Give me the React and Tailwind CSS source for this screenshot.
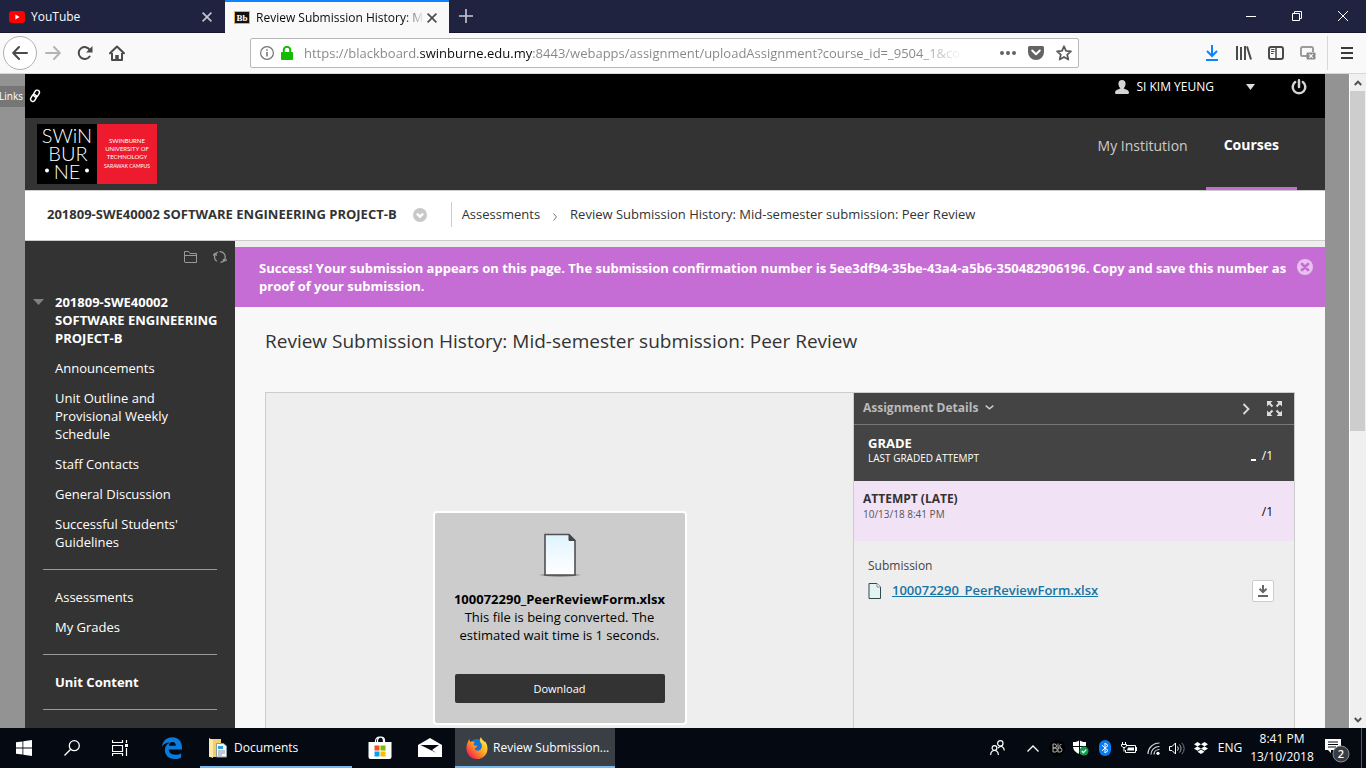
import React from "react";

const navItem = "block text-[13px] leading-[18px] text-white";

function IconButton({ label, className = "", children }) {
  return (
    <button type="button" aria-label={label} className={"flex shrink-0 items-center justify-center " + className}>
      {children}
    </button>
  );
}

function Cross({ color }) {
  return (
    <svg width="10" height="10" viewBox="0 0 10 10" fill="none" stroke={color} strokeWidth="1.6">
      <path d="M.6.6l8.8 8.8M9.4.6L.6 9.4" />
    </svg>
  );
}

function TabBar() {
  return (
    <div className="flex h-[33px] shrink-0 border-b border-[#14162c] bg-[#202340] text-[12px]">
      <div className="flex w-[225px] items-center pt-[2px] pr-[10px] pl-2 text-[#f9f9fa]">
        <svg width="18" height="12" viewBox="0 0 18 12" className="shrink-0">
          <rect x="1" width="16" height="12" rx="3" fill="#f00" />
          <path d="M7.4 3.4v5.2L11.6 6z" fill="#fff" />
        </svg>
        <span className="ml-[5px] flex-1">YouTube</span>
        <IconButton label="Close tab" className="size-4">
          <Cross color="#c6c6d0" />
        </IconButton>
      </div>
      <div className="-mb-px flex w-[224px] items-center border-t-2 border-[#0a84ff] bg-[#f9f9fa] pr-2 pl-[9px] text-[#0c0c0d]">
        <svg width="16" height="13" viewBox="0 0 16 13" className="shrink-0">
          <rect x=".5" y=".5" width="15" height="12" fill="#111" stroke="#e0b040" />
          <text x="8" y="10" textAnchor="middle" fontSize="9" fontWeight="700" fill="#fff" fontFamily="Liberation Serif, serif">
            Bb
          </text>
        </svg>
        <span className="ml-[6px] w-[168px] shrink-0 overflow-hidden whitespace-nowrap [mask-image:linear-gradient(to_right,#000_88%,transparent)]">
          Review Submission History: Mid-semester submission
        </span>
        <IconButton label="Close tab" className="size-4">
          <Cross color="#4a4a4c" />
        </IconButton>
      </div>
      <IconButton label="New tab" className="w-[34px]">
        <svg width="14" height="14" viewBox="0 0 14 14" stroke="#c9c9d4" strokeWidth="1.6">
          <path d="M7 0v14M0 7h14" />
        </svg>
      </IconButton>
      <div className="ml-auto flex">
        <IconButton label="Minimize" className="w-[46px]">
          <svg width="10" height="10" viewBox="0 0 10 10" stroke="#fff">
            <path d="M0 5.5h10" />
          </svg>
        </IconButton>
        <IconButton label="Restore" className="w-[46px]">
          <svg width="10" height="10" viewBox="0 0 10 10" fill="none" stroke="#fff">
            <path d="M.5 2.5h7v7h-7zM2.5 2.5v-2h7v7h-2" />
          </svg>
        </IconButton>
        <IconButton label="Close" className="w-[46px]">
          <svg width="10" height="10" viewBox="0 0 10 10" fill="none" stroke="#fff">
            <path d="M0 0l10 10M10 0L0 10" />
          </svg>
        </IconButton>
      </div>
    </div>
  );
}

function Toolbar() {
  return (
    <div className="flex h-[41px] shrink-0 items-center border-b border-[#d7d7db] bg-[#f9f9fa] pl-[3px]">
      <IconButton label="Back" className="size-[34px] rounded-full border border-[#b1b1b3] bg-white">
        <svg width="16" height="16" viewBox="0 0 16 16" fill="none" stroke="#4a4a4c" strokeWidth="2" strokeLinecap="round" strokeLinejoin="round">
          <path d="M7 2L1.2 8 7 14M1.5 8H15" />
        </svg>
      </IconButton>
      <IconButton label="Forward" className="size-8">
        <svg width="16" height="16" viewBox="0 0 16 16" fill="none" stroke="#b4b4b6" strokeWidth="2" strokeLinecap="round" strokeLinejoin="round">
          <path d="M9 2l5.8 6L9 14M14.500 8H1" />
        </svg>
      </IconButton>
      <IconButton label="Reload" className="size-8">
        <svg width="16" height="16" viewBox="0 0 16 16" fill="none" stroke="#4a4a4c" strokeWidth="2">
          <path d="M12.600 11.500A6 6 0 1 1 13 5.200" strokeLinecap="round" />
          <path d="M15.500 1v6.500H9z" fill="#4a4a4c" stroke="none" />
        </svg>
      </IconButton>
      <IconButton label="Home" className="size-8">
        <svg width="16" height="16" viewBox="0 0 16 16" fill="none" stroke="#4a4a4c" strokeWidth="2" strokeLinejoin="round">
          <path d="M1 8.300L8 1.500l7 6.800" strokeLinecap="round" />
          <path d="M3 8v7h10V8" />
          <path d="M8 10v5" strokeWidth="3.500" />
        </svg>
      </IconButton>
      <div className="mx-[117px] flex h-[30px] min-w-0 flex-1 items-center rounded-[2px] border border-[#b8b8bb] bg-white pl-[9px]">
        <svg width="14" height="14" viewBox="0 0 14 14" fill="none" stroke="#737375" className="shrink-0">
          <circle cx="7" cy="7" r="6.400" strokeWidth="1.200" />
          <path d="M7 6v4.500M7 3.200v1.500" strokeWidth="1.500" />
        </svg>
        <svg width="12" height="14" viewBox="0 0 12 14" className="ml-[7px] shrink-0">
          <rect y="6" width="12" height="8" rx="1" fill="#12bc00" />
          <path d="M2.800 7V4a3.200 3.200 0 0 1 6.400 0v3" fill="none" stroke="#12bc00" strokeWidth="2" />
        </svg>
        <input
          aria-label="Address"
          readOnly
          defaultValue="https://blackboard.swinburne.edu.my:8443/webapps/assignment/uploadAssignment?course_id=_9504_1&course"
          className="ml-[11px] min-w-0 flex-1 bg-[linear-gradient(to_right,#858587_115px,#0c0c0d_115px,#0c0c0d_229px,#858587_229px,#858587_615px,transparent_658px)] bg-clip-text text-[13px] leading-5 text-transparent outline-none"
        />
        <div className="ml-8 flex">
          <IconButton label="Page actions" className="size-7">
            <svg width="16" height="4" viewBox="0 0 16 4" fill="#636365">
              <circle cx="2" cy="2" r="2" />
              <circle cx="8" cy="2" r="2" />
              <circle cx="14" cy="2" r="2" />
            </svg>
          </IconButton>
          <IconButton label="Save to Pocket" className="size-7">
            <svg width="16" height="14" viewBox="0 0 16 14">
              <path d="M1.500 0h13A1.500 1.500 0 0 1 16 1.500V6A8 8 0 0 1 0 6V1.500A1.500 1.500 0 0 1 1.500 0z" fill="#636365" />
              <path d="M4.200 4.500L8 8.200l3.800-3.700" fill="none" stroke="#fff" strokeWidth="2" strokeLinecap="round" strokeLinejoin="round" />
            </svg>
          </IconButton>
          <IconButton label="Bookmark this page" className="size-7">
            <svg width="16" height="16" viewBox="0 0 16 16" fill="none" stroke="#5b5b5d" strokeWidth="1.800" strokeLinejoin="round">
              <path d="M8 1.300l2 4.500 4.900.5-3.700 3.300 1.100 4.900L8 12l-4.300 2.500 1.100-4.900L1.100 6.300 6 5.800z" />
            </svg>
          </IconButton>
        </div>
      </div>
      <IconButton label="Downloads" className="size-8">
        <svg width="12" height="16" viewBox="0 0 12 16" fill="none" stroke="#0a84ff" strokeWidth="2">
          <path d="M6 0v10.500M1 6l5 5 5-5M0 15h12" />
        </svg>
      </IconButton>
      <IconButton label="Library" className="size-8">
        <svg width="16" height="14" viewBox="0 0 16 14" fill="none" stroke="#4a4a4c" strokeWidth="2">
          <path d="M1 0v14M5 1v13M9 0v14M11 .5l4 13" />
        </svg>
      </IconButton>
      <IconButton label="Sidebars" className="size-8">
        <svg width="16" height="14" viewBox="0 0 16 14" fill="none" stroke="#4a4a4c">
          <rect x="1" y="1" width="14" height="12" rx="2" strokeWidth="2" />
          <path d="M8 1v12" strokeWidth="1.500" />
          <path d="M3 3.500h3.500M3 5.500h3.500M3 7.500h2.500" />
        </svg>
      </IconButton>
      <IconButton label="Screenshot" className="size-8">
        <svg width="16" height="14" viewBox="0 0 16 14" fill="none" stroke="#9c9c9e">
          <path d="M7 10H2.500A1.500 1.500 0 0 1 1 8.500v-6A1.500 1.500 0 0 1 2.500 1h9A1.500 1.500 0 0 1 13 2.500V6" strokeWidth="2" />
          <rect x="6.500" y="6.500" width="9" height="7" rx="1" fill="#8c8c8e" stroke="none" />
          <path d="M9.200 8.200l3.600 3.600M12.800 8.200l-3.600 3.600" stroke="#fff" strokeWidth="1.200" />
        </svg>
      </IconButton>
      <div className="ml-[3px] h-[34px] w-px bg-[#d7d7db]" />
      <IconButton label="Open menu" className="mx-[3px] size-8">
        <svg width="12" height="12" viewBox="0 0 12 12" stroke="#3a3a3c" strokeWidth="2">
          <path d="M0 1h12M0 6h12M0 11h12" />
        </svg>
      </IconButton>
    </div>
  );
}

function Logo() {
  return (
    <svg width="120" height="60" viewBox="0 0 120 60" role="img" aria-label="Swinburne University of Technology Sarawak Campus">
      <rect width="60" height="60" fill="#000" />
      <rect x="60" width="60" height="60" fill="#ee1b2e" />
      <g fill="#fff" fontFamily="Lato, sans-serif" textAnchor="middle">
        <text x="30" y="19" fontSize="20" fontWeight="300">SWiN</text>
        <text x="31" y="37" fontSize="20" fontWeight="300">BUR</text>
        <text x="30" y="55" fontSize="20" fontWeight="300">NE</text>
        <g fontSize="6">
          <text x="90" y="18.500">SWINBURNE</text>
          <text x="90" y="26.500">UNIVERSITY OF</text>
          <text x="90" y="34.500">TECHNOLOGY</text>
        </g>
        <text x="90" y="44" fontSize="5">SARAWAK CAMPUS</text>
      </g>
      <circle cx="10" cy="46.500" r="2" fill="#fff" />
      <circle cx="50" cy="46.500" r="2" fill="#fff" />
    </svg>
  );
}

function SiteHeader() {
  return (
    <header className="shrink-0">
      <div className="flex h-11 items-start justify-between bg-black px-1 text-white">
        <a href="#quick-links" aria-label="Quick links" className="mt-[15px]">
          <svg width="12" height="14" viewBox="0 0 12 14" fill="none" stroke="#fff" strokeWidth="1.500">
            <rect x="5.200" y="1" width="4.600" height="7" rx="2.300" transform="rotate(30 7.500 4.500)" />
            <rect x="2.200" y="5.500" width="4.600" height="7" rx="2.300" transform="rotate(30 4.500 9)" />
          </svg>
        </a>
        <div className="mr-[14px] flex h-[25px] items-center">
          <button type="button" className="flex items-center text-[12px]">
            <svg width="14" height="14" viewBox="0 0 14 14" fill="#d4d4d4">
              <path d="M7 0c2.300 0 3.600 1.600 3.600 3.800 0 1.800-.9 3.600-2 4.400 0 1 5.200.8 5.400 4.300 0 1-.8 1.500-1.500 1.500h-11C.800 14 0 13.500 0 12.500.2 9 5.400 9.200 5.400 8.200c-1.100-.8-2-2.600-2-4.400C3.400 1.600 4.700 0 7 0z" />
            </svg>
            <span className="mx-[7px]">SI KIM YEUNG</span>
            <svg width="9" height="6" viewBox="0 0 9 6" className="ml-[25px]" fill="#ddd">
              <path d="M0 0h9L4.500 6z" />
            </svg>
          </button>
          <IconButton label="Logout" className="ml-9 size-4">
            <svg width="16" height="16" viewBox="0 0 16 16" fill="none" stroke="#d4d4d4" strokeWidth="2.500" strokeLinecap="round">
              <path d="M4.200 3a6.300 6.300 0 1 0 7.600 0M8 1.300V8" />
            </svg>
          </IconButton>
        </div>
      </div>
      <div className="flex h-[72px] items-stretch justify-between bg-[#333] pr-7 pl-3">
        <a href="#home" className="mt-[6px]">
          <Logo />
        </a>
        <nav className="flex text-[14px]">
          <a href="#institution" className="px-[18px] pt-[18px] leading-5 text-[#ccc]">My Institution</a>
          <a href="#courses" className="border-b-[3px] border-[#c56dd5] px-[18px] pt-[17px] leading-5 font-bold text-white">Courses</a>
        </nav>
      </div>
      <div className="flex h-[51px] items-center border-y border-[#ccc] bg-white pb-[2px] pl-[22px] text-[13px] text-[#333]">
        <a href="#course" className="font-bold">201809-SWE40002 SOFTWARE ENGINEERING PROJECT-B</a>
        <IconButton label="Course options" className="ml-4 size-[14px]">
          <svg width="14" height="14" viewBox="0 0 14 14">
            <circle cx="7" cy="7" r="7" fill="#c8c8c8" />
            <path d="M3.800 5.500L7 8.700l3.200-3.200" fill="none" stroke="#fff" strokeWidth="2.400" />
          </svg>
        </IconButton>
        <div className="mr-[10px] ml-[24px] h-[25px] w-px bg-[#ccc]" />
        <a href="#assessments">Assessments</a>
        <svg width="4" height="8" viewBox="0 0 4 8" fill="none" stroke="#777" className="mx-[13px] mt-1">
          <path d="M.5.5L3.500 4 .5 7.500" />
        </svg>
        <span>Review Submission History: Mid-semester submission: Peer Review</span>
      </div>
    </header>
  );
}

function Sidebar() {
  return (
    <aside className="w-[210px] shrink-0 bg-[#333]">
      <div className="flex h-8 items-center justify-end gap-[16px] pr-2">
        <IconButton label="Course folder view" className="size-[14px]">
          <svg width="13" height="12" viewBox="0 0 13 12" fill="none" stroke="#999">
            <path d="M.5 11V.5h4l1.500 2h6.500V11.500H1zM.5 4.500h12" />
          </svg>
        </IconButton>
        <IconButton label="Refresh" className="size-[14px]">
          <svg width="14" height="12" viewBox="0 0 14 12" fill="none" stroke="#999" strokeWidth="1.300">
            <path d="M3.800 10.300A5.300 5.300 0 0 1 2 4a5.300 5.300 0 0 1 3-3M6.500.7a5.300 5.300 0 0 1 5.500 6.800 5.300 5.300 0 0 1-4.500 3.800" />
            <path d="M0 4.500l2-2 1.800 2M10 8.200l2 1.800 2-1.500" />
          </svg>
        </IconButton>
      </div>
      <nav className="mt-5 flex items-start">
        <svg width="11" height="6" viewBox="0 0 11 6" className="mt-[6px] mr-[11px] ml-2 shrink-0" fill="#808080">
          <path d="M0 0h11L5.500 6z" />
        </svg>
        <div className="flex min-w-0 flex-1 flex-col gap-3 pr-4">
          <a href="#top" className={navItem + " font-bold"}>201809-SWE40002 SOFTWARE ENGINEERING PROJECT-B</a>
          <a href="#announcements" className={navItem}>Announcements</a>
          <a href="#outline" className={navItem + " pr-8"}>Unit Outline and Provisional Weekly Schedule</a>
          <a href="#staff" className={navItem}>Staff Contacts</a>
          <a href="#discussion" className={navItem}>General Discussion</a>
          <a href="#guidelines" className={navItem}>Successful Students' Guidelines</a>
        </div>
      </nav>
      <hr className="mx-[18px] my-[18px] border-[#999]" />
      <div className="flex flex-col gap-3 pl-[30px]">
        <a href="#assess" className={navItem}>Assessments</a>
        <a href="#grades" className={navItem}>My Grades</a>
      </div>
      <hr className="mx-[18px] my-[18px] border-[#999]" />
      <h3 className={navItem + " pl-[30px] font-bold"}>Unit Content</h3>
      <hr className="mx-[18px] my-[18px] border-[#999]" />
    </aside>
  );
}

function Details() {
  return (
    <section className="w-[441px] shrink-0 border-l border-[#ccc] bg-[#eee]">
      <div className="flex h-8 items-center border-b border-[#777] bg-[#444] pr-3 pl-[9px]">
        <button type="button" className="mb-[2px] flex items-center gap-[7px] text-[12px] font-bold text-[#bbb]">
          Assignment Details
          <svg width="9" height="5" viewBox="0 0 9 5" fill="none" stroke="#ccc" strokeWidth="1.500">
            <path d="M.7.6l3.800 3.200L8.300.6" />
          </svg>
        </button>
        <IconButton label="Collapse panel" className="ml-auto size-4">
          <svg width="8" height="12" viewBox="0 0 8 12" fill="none" stroke="#ddd" strokeWidth="1.800">
            <path d="M1.500 1l5 5-5 5" />
          </svg>
        </IconButton>
        <IconButton label="Full screen" className="ml-[12px] size-4">
          <svg width="15" height="15" viewBox="0 0 15 15" stroke="#ddd" strokeWidth="2" fill="#ddd">
            <path d="M2 2l3.500 3.500M13 2L9.500 5.500M2 13l3.500-3.500M13 13L9.500 9.500" />
            <path d="M0 0h5.500L0 5.500zM15 0v5.500L9.500 0zM0 15V9.500L5.500 15zM15 15H9.500L15 9.500z" stroke="none" />
          </svg>
        </IconButton>
      </div>
      <div className="flex h-14 items-start justify-between bg-[#444] pt-[10px] pr-[21px] pl-[14px] text-white">
        <div>
          <h4 className="text-[13px] leading-4 font-bold">GRADE</h4>
          <p className="text-[10px] leading-[14px]">LAST GRADED ATTEMPT</p>
        </div>
        <div className="mt-3 flex items-center gap-[6px] text-[12px] leading-[18px]">
          <span className="mt-2 h-[2px] w-[5px] bg-white" aria-label="no grade" />
          <span>/1</span>
        </div>
      </div>
      <div className="flex h-[60px] items-start justify-between bg-[#f2e2f5] pt-[10px] pr-[21px] pl-[9px] text-[#333]">
        <div>
          <h4 className="text-[12px] leading-4 font-bold">ATTEMPT (LATE)</h4>
          <p className="text-[10px] leading-[14px] text-[#555]">10/13/18 8:41 PM</p>
        </div>
        <span className="mt-3 text-[12px] leading-[18px] text-black">/1</span>
      </div>
      <div className="pt-4 pr-5 pl-[14px]">
        <p className="text-[12px] leading-[18px] text-[#444]">Submission</p>
        <div className="mt-[5px] flex items-center">
          <svg width="13" height="16" viewBox="0 0 13 16" className="shrink-0">
            <path d="M1 .5h8L12.500 4v11.500H1z" fill="#e6f3f3" stroke="#2f4a4d" />
            <path d="M9 .5V4h3.500" fill="#fff" stroke="#7b8e90" />
          </svg>
          <a href="#file" className="ml-[11px] text-[13px] font-semibold text-[#1874a4] underline">100072290_PeerReviewForm.xlsx</a>
          <IconButton label="Download file" className="ml-auto size-[22px] rounded-[2px] border border-[#ccc] bg-white">
            <svg width="10" height="12" viewBox="0 0 10 12" fill="none" stroke="#666" strokeWidth="2">
              <path d="M5 0v6.500M1.500 3.800L5 7.200l3.500-3.400" />
              <path d="M0 11h10" />
            </svg>
          </IconButton>
        </div>
      </div>
    </section>
  );
}

function Content() {
  return (
    <main className="flex min-w-0 flex-1 flex-col bg-[#f8f8f8] text-[#333]">
      <div className="flex shrink-0 items-start border-t-[6px] border-[#eee] bg-[#c56dd5] py-3 pr-3 pl-6 text-white">
        <p role="status" className="flex-1 pr-1 text-[13px] leading-[18px] font-bold">
          Success! Your submission appears on this page. The submission confirmation number is 5ee3df94-35be-43a4-a5b6-350482906196. Copy and save this number as proof of your submission.
        </p>
        <IconButton label="Close message" className="size-4">
          <svg width="16" height="16" viewBox="0 0 16 16">
            <circle cx="8" cy="8" r="8" fill="#e6c3ec" />
            <path d="M5 5l6 6M11 5l-6 6" stroke="#c56dd5" strokeWidth="2.800" strokeLinecap="round" />
          </svg>
        </IconButton>
      </div>
      <h1 className="mt-5 shrink-0 pl-[30px] text-[19px] leading-7">Review Submission History: Mid-semester submission: Peer Review</h1>
      <div className="mx-[30px] mt-[37px] flex min-h-0 flex-1 border border-b-0 border-[#ccc] bg-[#eee]">
        <div className="flex flex-1 items-start justify-center pt-[118px]">
          <div className="flex w-[254px] flex-col items-center rounded border-2 border-white bg-[#ccc] p-5 text-center text-[13px] leading-[18px] text-black">
            <svg width="44" height="44" viewBox="0 0 44 44" className="shrink-0">
              <defs>
                <linearGradient id="sheet" x1="0" y1="0" x2="0" y2="1">
                  <stop offset="0" stopColor="#e0f4fd" />
                  <stop offset="1" stopColor="#fff" />
                </linearGradient>
                <radialGradient id="shade">
                  <stop offset=".6" stopColor="#777" />
                  <stop offset="1" stopColor="#777" stopOpacity="0" />
                </radialGradient>
              </defs>
              <ellipse cx="22" cy="42" rx="22" ry="2" fill="url(#shade)" />
              <path d="M7 1.500h24l6 6V42H7z" fill="url(#sheet)" stroke="#505050" strokeWidth="1.600" />
              <path d="M31 1.500V7.500h6z" fill="#444" stroke="#444" />
            </svg>
            <strong className="mt-[13px] block">100072290_PeerReviewForm.xlsx</strong>
            <p>This file is being converted. The estimated wait time is 1 seconds.</p>
            <button type="button" className="mt-[30px] h-[29px] w-full rounded-[2px] bg-[#333] text-[11px] text-white">Download</button>
          </div>
        </div>
        <Details />
      </div>
    </main>
  );
}

function Scrollbar() {
  return (
    <div className="flex w-[17px] shrink-0 flex-col border-l border-white bg-[#f0f0f0]">
      <IconButton label="Scroll up" className="h-[17px]">
        <svg width="8" height="6" viewBox="0 0 8 6" fill="none" stroke="#505050" strokeWidth="2">
          <path d="M.8 5L4 1.600 7.200 5" />
        </svg>
      </IconButton>
      <div className="mr-px h-[52%] bg-[#cdcdcd]" />
      <IconButton label="Scroll down" className="mt-auto h-[17px]">
        <svg width="8" height="6" viewBox="0 0 8 6" fill="none" stroke="#505050" strokeWidth="2">
          <path d="M.8 1L4 4.400 7.200 1" />
        </svg>
      </IconButton>
    </div>
  );
}

function Taskbar() {
  return (
    <footer className="flex h-10 shrink-0 items-stretch bg-[#050a12] text-[12px] text-white">
      <IconButton label="Start" className="w-12">
        <svg width="16" height="16" viewBox="0 0 16 16" fill="#fff">
          <path d="M0 2.300L6.500 1.400v6.200H0zM7.300 1.300L16 0v7.600H7.300zM0 8.400h6.500v6.200L0 13.700zM7.300 8.400H16V16l-8.700-1.300z" />
        </svg>
      </IconButton>
      <IconButton label="Search" className="w-12">
        <svg width="16" height="16" viewBox="0 0 16 16" fill="none" stroke="#fff" strokeWidth="1.300">
          <circle cx="10.300" cy="5.700" r="5" />
          <path d="M6.700 9.300L.5 15.500" />
        </svg>
      </IconButton>
      <IconButton label="Task view" className="w-12">
        <svg width="16" height="16" viewBox="0 0 16 16" fill="none" stroke="#fff">
          <path d="M.5 0v2.500h10V0M.5 5.500h10v6H.5zM.5 16v-2.500h10V16M14.500 0v3M14.500 8v8" strokeWidth="1.200" />
          <path d="M13 4h3v3h-3z" fill="#fff" stroke="none" />
        </svg>
      </IconButton>
      <IconButton label="Edge" className="mx-1 w-12">
        <svg width="20" height="22" viewBox="0 0 20 22" fill="#0b7bdb">
          <path d="M0 9.500C.8 4 4.700.3 10.200.3 16.500.3 20 5 20 10.300v2.300H6.700c.1 3.500 3.300 5.200 6.700 5.200 2.200 0 4.200-.6 5.700-1.600v4.200c-1.700 1-4 1.500-6.500 1.500C6.500 21.900 2.900 18.200 2.900 13c0-3.300 1.900-6.200 5-7.500C4.600 5.300 1.700 7 0 9.500zm6.900-.7h6.900c0-2.300-1.200-3.700-3.300-3.700S7.200 6.500 6.900 8.800z" />
        </svg>
      </IconButton>
      <button type="button" className="flex w-[152px] items-center border-b-2 border-[#76b9ed] pt-[2px] pl-[9px]">
        <svg width="18" height="20" viewBox="0 0 18 20">
          <path d="M0 1h12v18H0z" fill="#f3cf6b" />
          <path d="M0 0l4 2.500V20l-4-1.500z" fill="#ffe9a6" />
          <path d="M7.500 5.500h7L17.500 8v11h-10z" fill="#f5f8fa" stroke="#8d9aa3" />
          <path d="M9 8h5v3H9z" fill="#2e9fd8" />
          <path d="M9 13h7M9 15h7M9 17h4" stroke="#8799a5" />
        </svg>
        <span className="ml-[7px]">Documents</span>
      </button>
      <IconButton label="Store" className="ml-1 w-12">
        <svg width="24" height="24" viewBox="0 0 24 24">
          <path d="M7.500 7V5a4 4 0 0 1 8 0v2M9.500 7V4.500a3.500 3.500 0 0 1 7 0V7" fill="none" stroke="#fff" strokeWidth="1.200" />
          <path d="M.5 6h23v15a2 2 0 0 1-2 2h-19a2 2 0 0 1-2-2z" fill="#fff" />
          <path d="M6.500 9.500h5v5h-5z" fill="#f25022" />
          <path d="M12.500 9.500h5v5h-5z" fill="#7fba00" />
          <path d="M6.500 15.500h5v5h-5z" fill="#00a4ef" />
          <path d="M12.500 15.500h5v5h-5z" fill="#ffb900" />
        </svg>
      </IconButton>
      <IconButton label="Mail" className="mx-[1px] w-[50px]">
        <svg width="24" height="20" viewBox="0 0 24 20">
          <path d="M0 7L12 0l12 7v12H0z" fill="#fff" />
          <path d="M2.500 7h18.500l-7 5 4.500 3z" fill="#050a12" />
        </svg>
      </IconButton>
      <button type="button" className="-ml-px flex w-40 items-center border-b-2 border-[#76b9ed] bg-[#3a3e45] pt-[2px] pl-[11px]">
        <svg width="22" height="22" viewBox="0 0 22 22">
          <defs>
            <linearGradient id="fox" x1="1" y1="0" x2="0" y2="1">
              <stop offset=".1" stopColor="#fff04a" />
              <stop offset=".5" stopColor="#ff9a1f" />
              <stop offset=".85" stopColor="#f6274f" />
            </linearGradient>
          </defs>
          <circle cx="11" cy="10" r="8" fill="#1274d8" />
          <path d="M3.500 2c0 1.200.3 2.200 1 3 1.300-.6 3-.5 4.500.3-1.600.8-1.600 2-.9 3.200l3.300.3c.4.900-2.400 2-2.600 3 .5 1.900 3.500 2.600 5.400 1 2.600-2 1.800-5.400.5-7C13.300 4.300 13.600 2 15 0c.2 2.300 2.500 3.100 3.600 5.300l.2-1.300c1.700 2.100 2.700 4.700 2.700 7.400C21.500 17.300 17 22 11 22S.4 17.300.4 11.500C.4 7.600 1.700 4.500 3.500 2z" fill="url(#fox)" />
        </svg>
        <span className="ml-[5px]">Review Submission...</span>
      </button>
      <div className="ml-auto flex">
        <IconButton label="People" className="mr-[9px] w-[30px]">
          <svg width="15" height="16" viewBox="0 0 15 16" fill="none" stroke="#fff" strokeWidth="1.200">
            <circle cx="4.500" cy="8" r="2.400" />
            <path d="M.6 15c.2-3 1.700-4.500 3.900-4.500S8.200 12 8.400 15" />
            <circle cx="10.300" cy="3.400" r="2.700" />
            <path d="M8 8c3-3 6-1.300 6.300 2.500" />
          </svg>
        </IconButton>
        <IconButton label="Show hidden icons" className="w-6">
          <svg width="12" height="7" viewBox="0 0 12 7" fill="none" stroke="#fff" strokeWidth="1.300">
            <path d="M.5 6.500L6 1l5.500 5.500" />
          </svg>
        </IconButton>
        <IconButton label="Beats" className="w-6">
          <svg width="16" height="16" viewBox="0 0 16 16" fill="none" stroke="#c4c4c4" strokeWidth=".9">
            <circle cx="8" cy="8" r="8" fill="#000" stroke="none" />
            <path d="M4 4v8h2.200a2 2 0 0 0 0-4H4h1.500a2 2 0 0 0 0-4zM9 3.500V12M12.500 4.500C11 3.500 9.500 6.800 12 7.500M9 8h2a2 2 0 0 1 0 4H9" />
          </svg>
        </IconButton>
        <IconButton label="Security" className="w-6">
          <svg width="16" height="16" viewBox="0 0 16 16">
            <path d="M0 2c3 .2 4.700-.5 6.500-2C8.300 1.500 10 2.200 13 2v4c0 4-2.500 6.500-6.500 8C2.500 12.500 0 10 0 6z" fill="#fff" />
            <path d="M6.500 0v14M0 6.500h13" stroke="#050a12" />
            <circle cx="11" cy="11" r="4.500" fill="#149a4c" />
            <path d="M8.800 11l1.600 1.600 2.900-3" fill="none" stroke="#fff" strokeWidth="1.300" />
          </svg>
        </IconButton>
        <IconButton label="Bluetooth" className="w-6">
          <svg width="12" height="16" viewBox="0 0 12 16">
            <rect width="12" height="16" rx="6" fill="#087bf0" />
            <path d="M3 5.200l6 5.300L6 13V3l3 2.500-6 5.300" fill="none" stroke="#fff" />
          </svg>
        </IconButton>
        <IconButton label="Battery" className="w-6">
          <svg width="16" height="12" viewBox="0 0 16 12" fill="none" stroke="#fff">
            <path d="M6 3.500h8.500v7h-10V8" />
            <path d="M7 5.500h6v3H6z" fill="#fff" stroke="none" />
            <path d="M15.500 5v4M1.500 0v3M4.500 0v3M.5 2.500h5V4L4 5.500H2L.5 4zM3 5v4.500" />
          </svg>
        </IconButton>
        <IconButton label="Wi-Fi" className="w-6">
          <svg width="13" height="13" viewBox="0 0 13 13" fill="none" stroke="#d8d8d8" strokeWidth="1.200">
            <path d="M1 12C1 6 6 1 12.500 1M4 12.500c0-4.500 3.500-8 8.500-8M7 12.500c0-3 2.300-5 5.500-5" />
            <circle cx="11" cy="11.300" r="1.600" fill="#fff" stroke="none" />
          </svg>
        </IconButton>
        <IconButton label="Volume" className="w-6">
          <svg width="17" height="13" viewBox="0 0 17 13" fill="none" stroke="#fff">
            <path d="M.5 4.500h2.500L6.500 1v11L3 8.500H.5z" />
            <path d="M8.500 4.500a3 3 0 0 1 0 4" />
            <path d="M10.500 2.500a6 6 0 0 1 0 8" stroke="#aaa" />
            <path d="M12.800.8a8 8 0 0 1 0 11.400" stroke="#777" />
          </svg>
        </IconButton>
        <IconButton label="Dropbox" className="w-6">
          <svg width="14" height="12" viewBox="0 0 14 12" fill="#fff">
            <path d="M3.500 0L7 2.200 3.500 4.400 0 2.200zM10.500 0L14 2.200l-3.500 2.200L7 2.200zM3.500 4.400L7 6.600 3.500 8.800 0 6.600zM10.500 4.400L14 6.600l-3.500 2.200L7 6.600zM7 7.600l3.500 2.200L7 12 3.500 9.800z" />
          </svg>
        </IconButton>
        <button type="button" className="w-[34px]">ENG</button>
        <button type="button" className="w-[70px] text-center leading-[18px] whitespace-nowrap">
          8:41 PM
          <br />
          13/10/2018
        </button>
        <IconButton label="Notifications" className="mr-1 w-[45px] border-r border-[#555a60] pr-[3px]">
          <svg width="25" height="26" viewBox="0 0 25 26" className="mt-1">
            <path d="M0 2h16v11H6v3l-3-3H0z" fill="#fff" />
            <path d="M3 5h10M3 7.500h10M3 10h8" stroke="#050a12" />
            <circle cx="16" cy="17" r="8" fill="#393d42" stroke="#8a8d90" />
            <text x="16" y="21" textAnchor="middle" fontSize="11" fontWeight="600" fill="#fff" fontFamily="Open Sans, sans-serif">2</text>
          </svg>
        </IconButton>
      </div>
    </footer>
  );
}

export default function App() {
  return (
    <div className="flex h-screen flex-col overflow-hidden font-['Open_Sans','Noto_Sans',sans-serif]">
      <TabBar />
      <Toolbar />
      <div className="flex min-h-0 flex-1 overflow-hidden bg-[#939393]">
        <div className="w-[25px] shrink-0 pt-3">
          <a href="#links" className="flex h-[21px] items-center justify-end bg-[#767676] pr-[2px] text-[10px] text-white">Links</a>
        </div>
        <div className="mr-6 flex min-w-0 flex-1 flex-col">
          <SiteHeader />
          <div className="flex min-h-0 flex-1 overflow-hidden">
            <Sidebar />
            <Content />
          </div>
        </div>
        <Scrollbar />
      </div>
      <Taskbar />
    </div>
  );
}
